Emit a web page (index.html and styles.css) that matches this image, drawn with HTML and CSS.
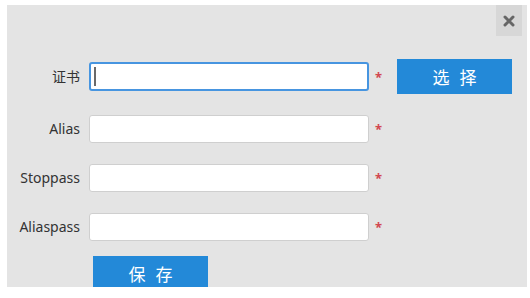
FILE: index.html
```html
<!DOCTYPE html>
<html lang="zh">
<head>
<meta charset="utf-8">
<title>证书</title>
<link rel="stylesheet" href="styles.css">
</head>
<body>
<div class="panel">
  <button class="close" type="button" aria-label="关闭">
    <svg width="12" height="12" viewBox="0 0 12 12"><path d="M2 2 L10 10 M10 2 L2 10" stroke="#666666" stroke-width="3" stroke-linecap="round"/></svg>
  </button>
  <form class="form">
    <div class="row row-first">
      <label class="label">证书</label>
      <span class="field-wrap"><input class="field focused" type="text"><span class="caret"></span></span>
      <span class="req">*</span>
      <button class="btn btn-select" type="button">选 择</button>
    </div>
    <div class="row">
      <label class="label">Alias</label>
      <span class="field-wrap"><input class="field" type="text"></span>
      <span class="req">*</span>
    </div>
    <div class="row">
      <label class="label">Stoppass</label>
      <span class="field-wrap"><input class="field" type="password"></span>
      <span class="req">*</span>
    </div>
    <div class="row">
      <label class="label">Aliaspass</label>
      <span class="field-wrap"><input class="field" type="password"></span>
      <span class="req">*</span>
    </div>
    <div class="row-save">
      <button class="btn btn-save" type="button">保 存</button>
    </div>
  </form>
</div>
</body>
</html>
```

FILE: styles.css
```css
html, body {
  margin: 0;
  padding: 0;
  background: #ffffff;
}
body {
  font-family: "Noto Sans", "Noto Sans CJK SC", sans-serif;
  color: #333333;
}
.panel {
  position: relative;
  box-sizing: border-box;
  margin: 5px 0 0 7px;
  width: 520px;
  height: 282px;
  background: #e4e4e4;
  overflow: hidden;
}
.close {
  position: absolute;
  top: 0;
  right: 5px;
  width: 26px;
  height: 31px;
  border: 0;
  padding: 0;
  background: #d7d7d7;
  display: flex;
  align-items: center;
  justify-content: center;
  cursor: pointer;
}
.form {
  display: flex;
  flex-direction: column;
  gap: 21px;
  padding-top: 54px;
}
.row {
  display: flex;
  align-items: center;
  height: 28px;
}
.row-first {
  height: 35px;
}
.label {
  width: 73px;
  text-align: right;
  font-size: 14px;
  line-height: 20px;
  color: #333333;
  flex: none;
}
.field-wrap {
  position: relative;
  margin-left: 9px;
  display: block;
  flex: none;
}
.field {
  display: block;
  box-sizing: border-box;
  width: 280px;
  height: 28px;
  margin: 0;
  border: 1px solid #cfcfcf;
  border-radius: 3px;
  background: #ffffff;
  outline: none;
  padding: 0 6px;
  font: inherit;
}
.field.focused {
  height: 29px;
  border: 2px solid #4795e0;
}
.caret {
  position: absolute;
  left: 5px;
  top: 5px;
  width: 2px;
  height: 19px;
  background: #6a6a6a;
}
.req {
  margin-left: 6px;
  color: #d2474f;
  font-size: 13px;
  font-weight: bold;
  line-height: 12px;
  width: 8px;
  flex: none;
}
.btn {
  border: 0;
  padding: 0;
  background: #2389d8;
  color: #ffffff;
  font-family: "Noto Sans CJK SC", sans-serif;
  font-size: 17px;
  letter-spacing: 3px;
  text-indent: 3px;
  width: 115px;
  height: 35px;
  cursor: pointer;
}
.btn-select {
  margin-left: 14px;
  flex: none;
}
.row-save {
  padding-left: 86px;
  margin-top: -6px;
}
```
